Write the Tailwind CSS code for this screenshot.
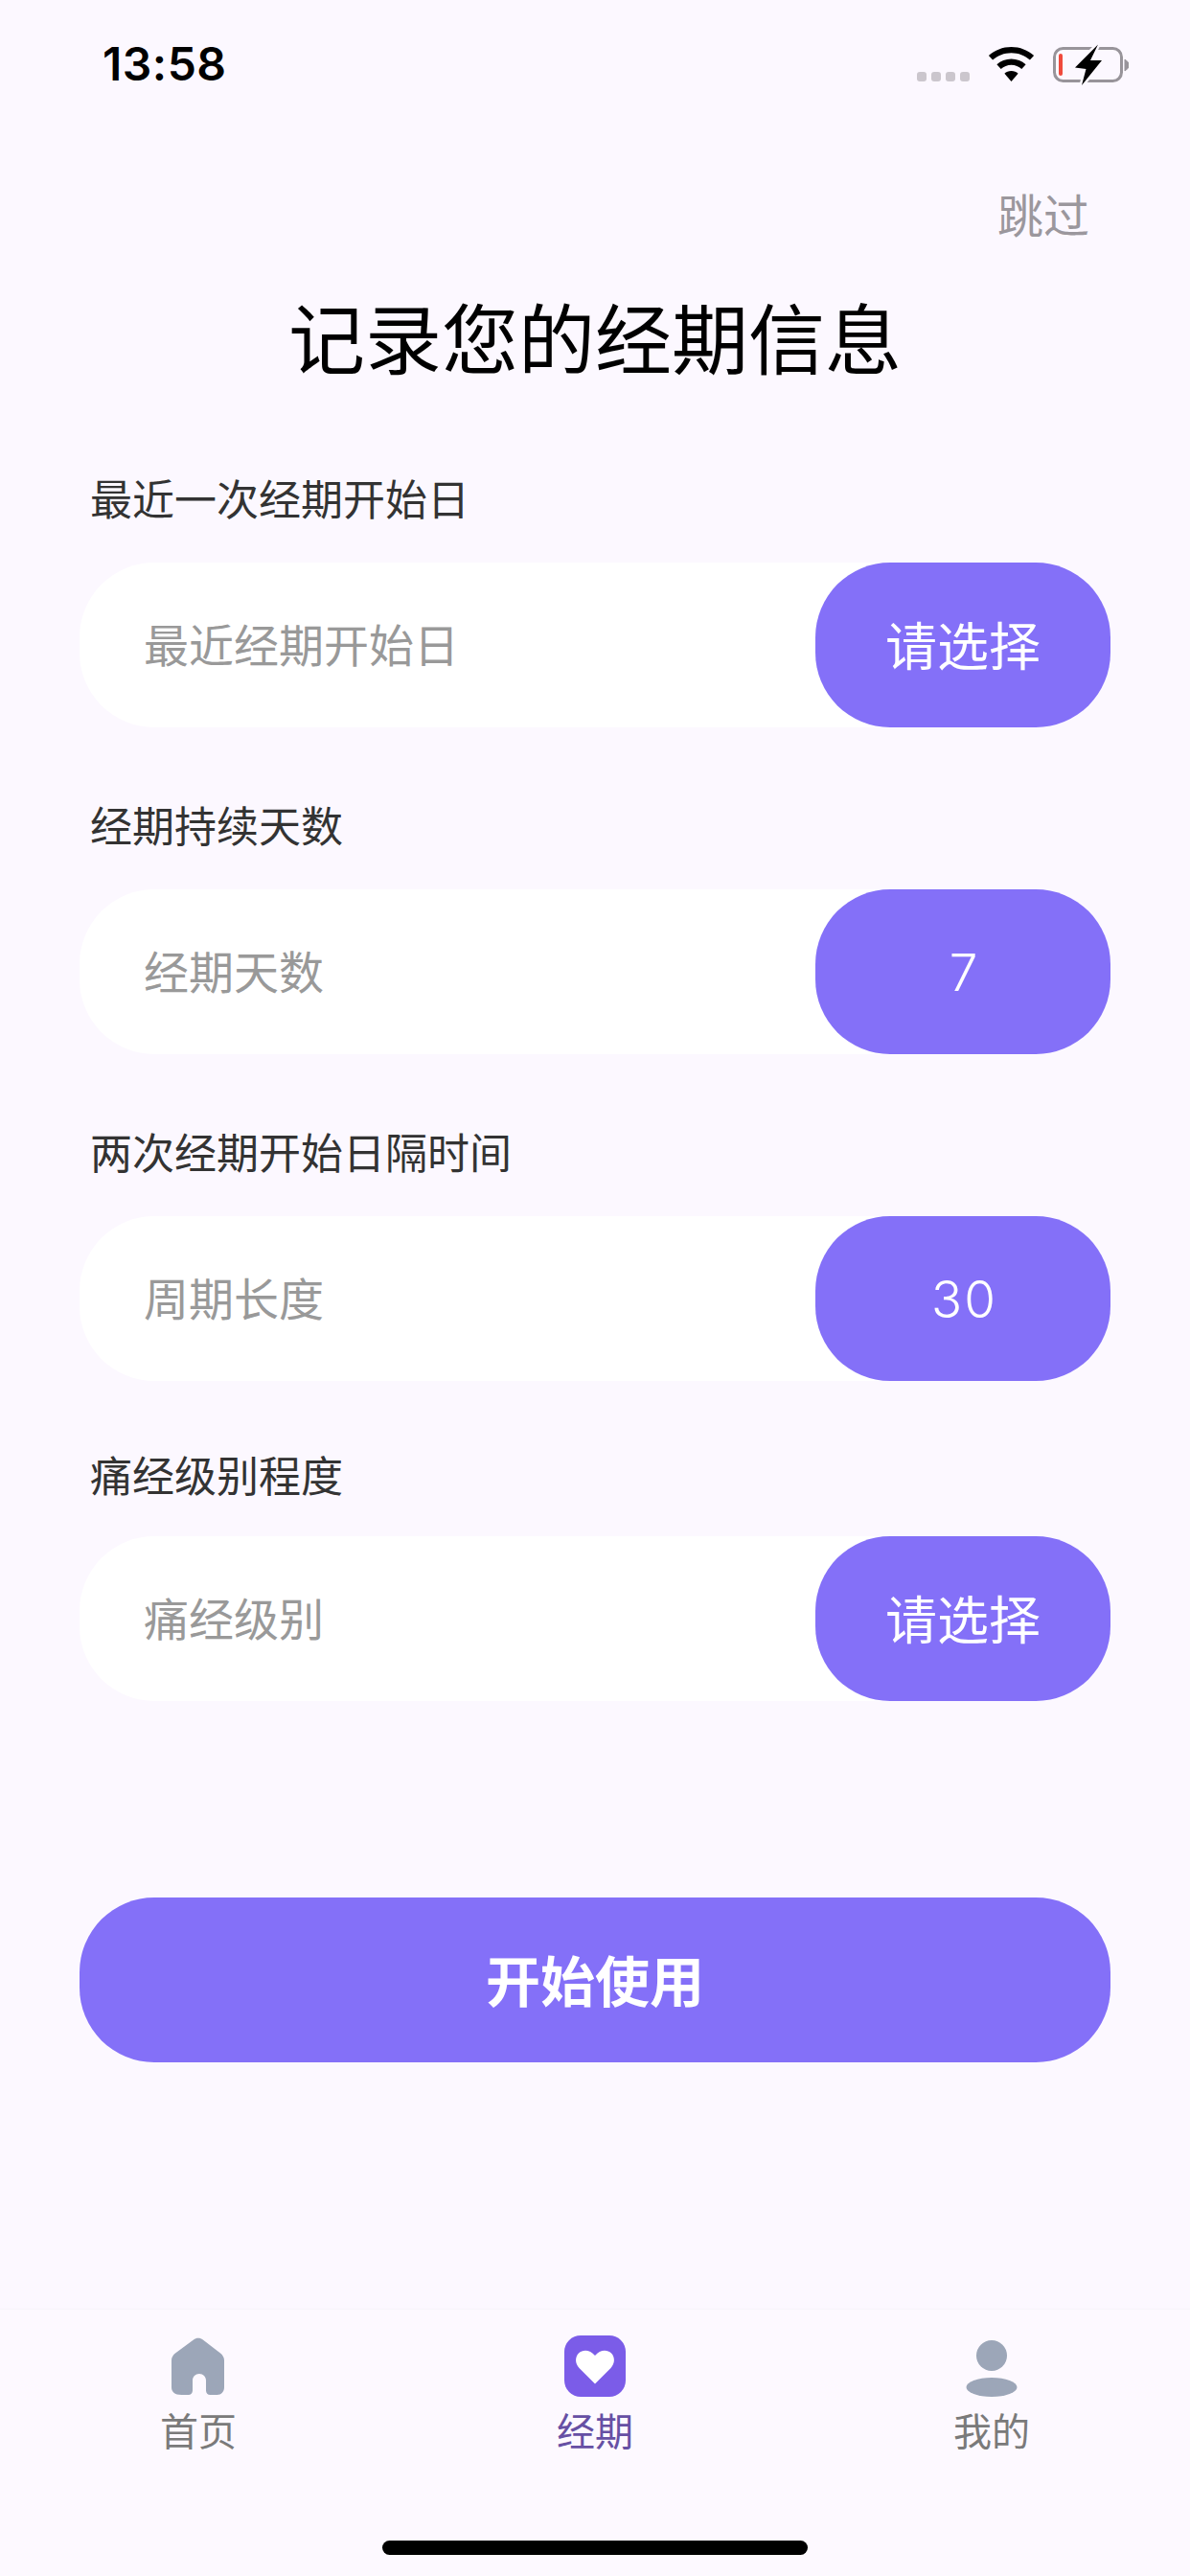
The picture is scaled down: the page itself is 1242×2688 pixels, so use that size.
<!DOCTYPE html>
<html lang="zh-CN">
<head>
<meta charset="utf-8">
<script src="https://cdn.jsdelivr.net/npm/@tailwindcss/browser@4"></script>
</head>
<body class="m-0">
<div class="w-[1242px] h-[2688px] bg-[#fcf8ff] flex flex-col overflow-hidden font-['Noto_Sans_CJK_SC','Noto_Sans',sans-serif]">
  <!-- status bar -->
  <div class="h-[132px] shrink-0 flex justify-between items-start">
    <div class="ml-[107px] mt-[36px] h-[62px] leading-[62px] text-[48px] font-semibold tracking-[0.5px] text-black font-['Inter',sans-serif]">13:58</div>
    <svg class="mt-[46px] mr-[61px]" width="224" height="44" viewBox="957 46 224 44">
      <g fill="#cbc6cd">
        <rect x="957" y="75" width="10" height="10" rx="3"/>
        <rect x="972" y="75" width="10" height="10" rx="3"/>
        <rect x="987" y="75" width="10" height="10" rx="3"/>
        <rect x="1002" y="75" width="10" height="10" rx="3"/>
      </g>
      <path d="M1055.500 49c-9 0-17.300 3.400-23.600 9l4.200 4.600c5.200-4.500 12-7.300 19.400-7.300s14.200 2.800 19.400 7.300l4.200-4.600C1072.800 52.400 1064.500 49 1055.500 49z" fill="#000"/>
      <path d="M1055.500 61.500c-5.800 0-11.100 2.200-15.100 5.800l4.300 4.700c2.900-2.600 6.700-4.200 10.800-4.200s7.900 1.600 10.800 4.200l4.300-4.700c-4-3.600-9.300-5.800-15.100-5.800z" fill="#000"/>
      <path d="M1055.500 74c-2.800 0-5.300 1-7.100 2.700l7.100 8.300 7.100-8.300c-1.800-1.700-4.300-2.700-7.100-2.700z" fill="#000"/>
      <rect x="1100.500" y="50.500" width="70" height="34" rx="9" fill="none" stroke="#98949a" stroke-width="3"/>
      <path d="M1174 62l3.500 3v6l-3.500 3z" fill="#98949a" stroke="#98949a" stroke-width="1"/>
      <rect x="1105" y="56" width="4" height="23" rx="2" fill="#f04a3c"/>
      <path d="M1146 46.500 1122 70.500 1133.500 72 1129 89 1150 63 1138 63z" fill="#fcf8ff" stroke="#fcf8ff" stroke-width="5"/>
      <path d="M1146 46.500 1122 70.500 1133.500 72 1129 89 1150 63 1138 63z" fill="#000"/>
    </svg>
  </div>

  <!-- skip -->
  <div class="mt-[60px] h-[60px] leading-[60px] text-right pr-[105px] text-[48px] text-[#9b979d]">跳过</div>

  <!-- title -->
  <h1 class="mt-[47px] h-[100px] leading-[100px] text-center text-[80px] font-normal text-black">记录您的经期信息</h1>

  <!-- field 1 -->
  <div class="mt-[90px] h-[60px] leading-[60px] ml-[94px] text-[44px] text-[#333333]">最近一次经期开始日</div>
  <div class="mt-[38px] mx-[83px] h-[172px] bg-white rounded-[78px] flex items-center justify-between">
    <span class="pl-[67px] pb-[3px] text-[47px] text-[#999999]">最近经期开始日</span>
    <span class="w-[308px] h-full pb-[4px] rounded-[78px] bg-[#8470f8] flex items-center justify-center text-[54px] text-white">请选择</span>
  </div>

  <!-- field 2 -->
  <div class="mt-[71px] h-[60px] leading-[60px] ml-[94px] text-[44px] text-[#333333]">经期持续天数</div>
  <div class="mt-[38px] mx-[83px] h-[172px] bg-white rounded-[78px] flex items-center justify-between">
    <span class="pl-[67px] pb-[3px] text-[47px] text-[#999999]">经期天数</span>
    <span class="w-[308px] h-full pt-[3px] pl-[3px] rounded-[78px] bg-[#8470f8] flex items-center justify-center text-[53px] font-light tracking-[2px] text-white font-['Inter',sans-serif]">7</span>
  </div>

  <!-- field 3 -->
  <div class="mt-[71px] h-[60px] leading-[60px] ml-[94px] text-[44px] text-[#333333]">两次经期开始日隔时间</div>
  <div class="mt-[38px] mx-[83px] h-[172px] bg-white rounded-[78px] flex items-center justify-between">
    <span class="pl-[67px] pb-[3px] text-[47px] text-[#999999]">周期长度</span>
    <span class="w-[308px] h-full pt-[3px] pl-[3px] rounded-[78px] bg-[#8470f8] flex items-center justify-center text-[53px] font-light tracking-[2px] text-white font-['Inter',sans-serif]">30</span>
  </div>

  <!-- field 4 -->
  <div class="mt-[67px] h-[60px] leading-[60px] ml-[94px] text-[44px] text-[#333333]">痛经级别程度</div>
  <div class="mt-[35px] mx-[83px] h-[172px] bg-white rounded-[78px] flex items-center justify-between">
    <span class="pl-[67px] pb-[3px] text-[47px] text-[#999999]">痛经级别</span>
    <span class="w-[308px] h-full pb-[4px] rounded-[78px] bg-[#8470f8] flex items-center justify-center text-[54px] text-white">请选择</span>
  </div>

  <!-- start -->
  <div class="mt-[205px] mx-[83px] h-[172px] pb-[3px] rounded-[78px] bg-[#8470f8] flex items-center justify-center text-[57px] font-bold text-white">开始使用</div>

  <!-- tab bar -->
  <div class="mt-auto h-[279px] shrink-0 bg-[#fdf9ff] border-t-[1px] border-[#f7f4fa] flex flex-col">
    <div class="grid grid-cols-3 pt-[27px]">
      <div class="flex flex-col items-center">
        <svg width="64" height="64" viewBox="0 0 64 64" class="block">
          <path d="M27 4.500c2.800-2.200 7-2.200 9.800 0L55 18.500c2.500 2 4 4.500 4 7.500v28c0 4.500-3 8-7.500 8h-7c-2.800 0-4.500-2-4.500-4.500V47c0-4-3-7-7-7s-7 3-7 7v10.500c0 2.500-1.700 4.500-4.500 4.500h-7C7 62 4 58.500 4 54V26c0-3 1.500-5.500 4-7.500z" fill="#9ca6b8"/>
        </svg>
        <span class="mt-[6px] h-[56px] leading-[56px] text-[40px] text-[#7a7a7a]">首页</span>
      </div>
      <div class="flex flex-col items-center">
        <svg width="64" height="64" viewBox="0 0 64 64" class="block">
          <rect width="64" height="64" rx="17" fill="#7b5ce8"/>
          <path d="M32 50.500 L15.500 34c-4.500-4.800-4.500-11.500-.5-15.500 4.500-4.300 11.800-3.800 17 2.500 5.200-6.300 12.500-6.800 17-2.500 4 4 4 10.700-.5 15.500z" fill="#fff"/>
        </svg>
        <span class="mt-[6px] h-[56px] leading-[56px] text-[40px] text-[#6650a4]">经期</span>
      </div>
      <div class="flex flex-col items-center">
        <svg width="64" height="64" viewBox="0 0 64 64" class="block">
          <circle cx="32" cy="21" r="16" fill="#9ca6b8"/>
          <ellipse cx="32" cy="54" rx="26.500" ry="10" fill="#9ca6b8"/>
        </svg>
        <span class="mt-[6px] h-[56px] leading-[56px] text-[40px] text-[#7a7a7a]">我的</span>
      </div>
    </div>
    <div class="mt-[88px] mx-auto w-[444px] h-[15px] rounded-full bg-black"></div>
  </div>
</div>
</body>
</html>
